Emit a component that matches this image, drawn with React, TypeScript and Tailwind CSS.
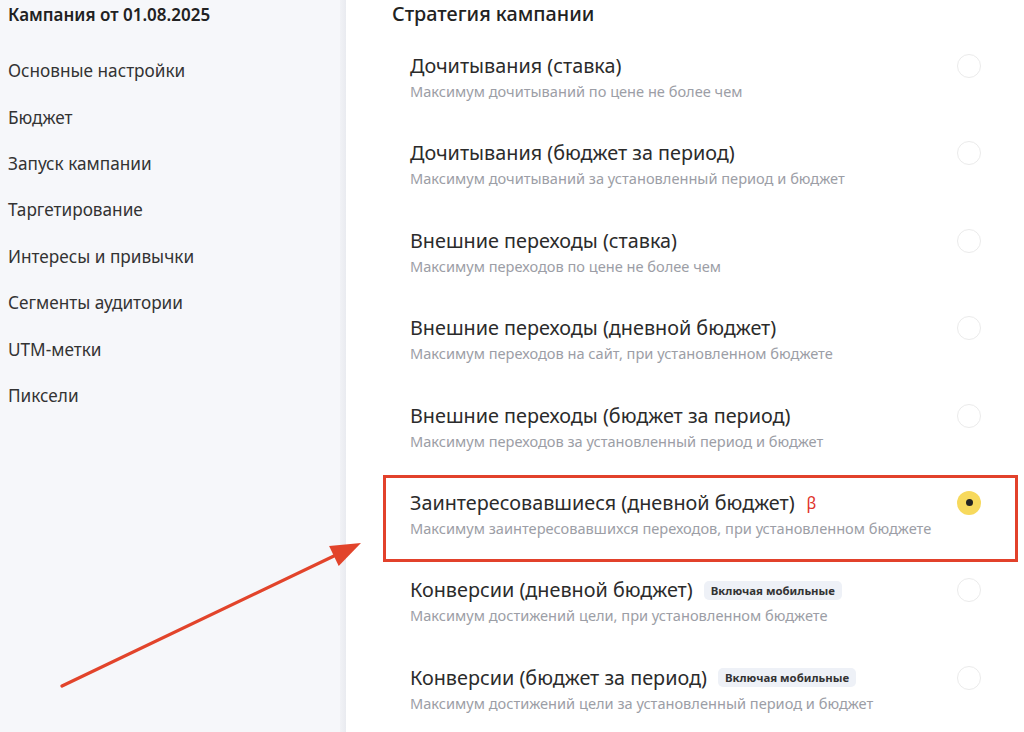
import React from "react";

const menu = [
  "Основные настройки",
  "Бюджет",
  "Запуск кампании",
  "Таргетирование",
  "Интересы и привычки",
  "Сегменты аудитории",
  "UTM-метки",
  "Пиксели",
];

type Item = { title: string; sub: string; badge?: boolean; beta?: boolean; selected?: boolean };

const items: Item[] = [
  { title: "Дочитывания (ставка)", sub: "Максимум дочитываний по цене не более чем" },
  { title: "Дочитывания (бюджет за период)", sub: "Максимум дочитываний за установленный период и бюджет" },
  { title: "Внешние переходы (ставка)", sub: "Максимум переходов по цене не более чем" },
  { title: "Внешние переходы (дневной бюджет)", sub: "Максимум переходов на сайт, при установленном бюджете" },
  { title: "Внешние переходы (бюджет за период)", sub: "Максимум переходов за установленный период и бюджет" },
  { title: "Заинтересовавшиеся (дневной бюджет)", sub: "Максимум заинтересовавшихся переходов, при установленном бюджете", beta: true, selected: true },
  { title: "Конверсии (дневной бюджет)", sub: "Максимум достижений цели, при установленном бюджете", badge: true },
  { title: "Конверсии (бюджет за период)", sub: "Максимум достижений цели за установленный период и бюджет", badge: true },
];

export default function App() {
  return (
    <div
      className="relative flex w-[1024px] h-[732px] overflow-hidden bg-white"
      style={{ fontFamily: '"Noto Sans", "Open Sans", sans-serif' }}
    >
      <aside className="w-[340px] shrink-0 bg-[#f6f7fa] flex flex-col">
        <div className="h-[31px] pl-2 pt-[2px] text-[17px] font-semibold text-[#222] leading-[26px]">
          Кампания от 01.08.2025
        </div>
        <div className="h-[17px]" />
        {menu.map((m) => (
          <div key={m} className="h-[46.4px] pl-2 flex items-center text-[17.2px] text-[#333]">
            {m}
          </div>
        ))}
      </aside>
      <div className="w-[6px] shrink-0 bg-gradient-to-r from-[#f1f2f6] to-[#e9ebf0]" />
      <main className="flex-1 flex flex-col">
        <div className="h-[38px] shrink-0 pl-[46px] pt-[1px] text-[19.8px] font-medium text-[#222] leading-[26px]">
          Стратегия кампании
        </div>
        <div className="flex flex-col pl-[37px] pr-[6px]">
          {items.map((it) => (
            <div
              key={it.title}
              className={
                "h-[87.4px] shrink-0 flex items-start justify-between pl-[24px] pr-[34px] border-[3px] " +
                (it.selected ? "border-[#e2412b]" : "border-transparent")
              }
            >
              <div className="flex flex-col pt-[11px]">
                <div className="flex items-center h-[28px]">
                  <span className="text-[19.8px] text-[#2b2b2b] leading-[28px]">{it.title}</span>
                  {it.beta && (
                    <span className="ml-[12px] text-[16px] text-[#e0312a] leading-[20px]">β</span>
                  )}
                  {it.badge && (
                    <span className="ml-[11px] h-[19px] px-[7px] rounded-[5px] bg-[#eef1f7] text-[11.4px] font-bold text-[#333] flex items-center">
                      Включая мобильные
                    </span>
                  )}
                </div>
                <div className="text-[14.6px] text-[#9c9ea6] leading-[22px]">{it.sub}</div>
              </div>
              <div className="pt-[13px]">
                {it.selected ? (
                  <div className="w-[24px] h-[24px] rounded-full bg-[#f7d95c] flex items-center justify-center">
                    <div className="w-[7px] h-[7px] rounded-full bg-[#222]" />
                  </div>
                ) : (
                  <div className="w-[24px] h-[24px] rounded-full border-[1.5px] border-[#ebebeb]" />
                )}
              </div>
            </div>
          ))}
        </div>
      </main>
      <svg
        className="absolute inset-0 pointer-events-none"
        width="1024"
        height="732"
        viewBox="0 0 1024 732"
      >
        <line x1="62" y1="686" x2="336" y2="555" stroke="#e2442b" strokeWidth="3.2" strokeLinecap="round" />
        <polygon points="361,543 338.7,565.9 329.1,546.1" fill="#e2442b" />
      </svg>
    </div>
  );
}
